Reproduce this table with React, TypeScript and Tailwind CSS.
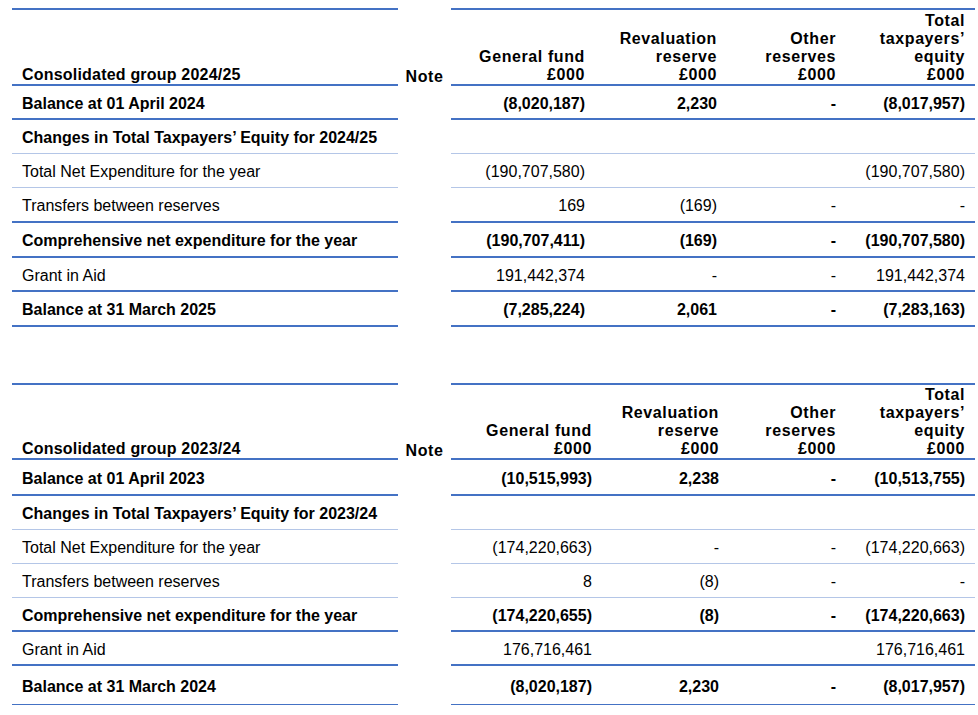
import React from "react";

type Row = {
  label: string;
  values: string[];
  bold?: boolean;
  line: "thick" | "light" | "thin";
  h: string;
};

type TableProps = {
  title: string;
  cols: string[];
  headerH: string;
  rows: Row[];
};

const lineClass = {
  thick: "border-b-2 border-[#4472C4]",
  light: "border-b border-[#B4C6E7]",
  thin: "border-b border-[#4472C4]",
};

const headers = [
  ["General fund", "£000"],
  ["Revaluation", "reserve", "£000"],
  ["Other", "reserves", "£000"],
  ["Total", "taxpayers’", "equity", "£000"],
];

function EquityTable({ title, cols, headerH, rows }: TableProps) {
  return (
    <div className="flex flex-col">
      {/* header */}
      <div className={`flex ${headerH}`}>
        <div className="w-[386px] border-y-2 border-[#4472C4] flex items-end pl-[10px] font-bold leading-[18px] tracking-[0.2px]">
          {title}
        </div>
        <div className="w-[53px] flex items-end justify-center font-bold leading-[18px] tracking-[0.6px]">
          Note
        </div>
        <div className="w-[524px] border-y-2 border-[#4472C4] flex">
          {headers.map((lines, i) => (
            <div
              key={i}
              className={`${cols[i]} flex flex-col justify-end items-end pr-[10px] font-bold leading-[18px] tracking-[0.6px] text-right`}
            >
              {lines.map((l) => (
                <span key={l}>{l}</span>
              ))}
            </div>
          ))}
        </div>
      </div>

      {rows.map((r) => (
        <div key={r.label} className={`flex ${r.h} ${r.bold ? "font-bold" : ""}`}>
          <div className={`w-[386px] ${lineClass[r.line]} flex items-center pl-[10px] pt-[3px]`}>
            {r.label}
          </div>
          <div className="w-[53px]" />
          <div className={`w-[524px] ${lineClass[r.line]} flex`}>
            {r.values.map((v, i) => (
              <div key={i} className={`${cols[i]} flex items-center justify-end pr-[10px] pt-[3px]`}>
                {v}
              </div>
            ))}
          </div>
        </div>
      ))}
    </div>
  );
}

const rows2425: Row[] = [
  { label: "Balance at 01 April 2024", values: ["(8,020,187)", "2,230", "-", "(8,017,957)"], bold: true, line: "thick", h: "h-[34px]" },
  { label: "Changes in Total Taxpayers’ Equity for 2024/25", values: ["", "", "", ""], bold: true, line: "light", h: "h-[34px]" },
  { label: "Total Net Expenditure for the year", values: ["(190,707,580)", "", "", "(190,707,580)"], line: "light", h: "h-[34px]" },
  { label: "Transfers between reserves", values: ["169", "(169)", "-", "-"], line: "thick", h: "h-[35px]" },
  { label: "Comprehensive net expenditure for the year", values: ["(190,707,411)", "(169)", "-", "(190,707,580)"], bold: true, line: "thick", h: "h-[35px]" },
  { label: "Grant in Aid", values: ["191,442,374", "-", "-", "191,442,374"], line: "thick", h: "h-[34px]" },
  { label: "Balance at 31 March 2025", values: ["(7,285,224)", "2,061", "-", "(7,283,163)"], bold: true, line: "thick", h: "h-[35px]" },
];

const rows2324: Row[] = [
  { label: "Balance at 01 April 2023", values: ["(10,515,993)", "2,238", "-", "(10,513,755)"], bold: true, line: "thick", h: "h-[36px]" },
  { label: "Changes in Total Taxpayers’ Equity for 2023/24", values: ["", "", "", ""], bold: true, line: "light", h: "h-[34px]" },
  { label: "Total Net Expenditure for the year", values: ["(174,220,663)", "-", "-", "(174,220,663)"], line: "light", h: "h-[34px]" },
  { label: "Transfers between reserves", values: ["8", "(8)", "-", "-"], line: "light", h: "h-[34px]" },
  { label: "Comprehensive net expenditure for the year", values: ["(174,220,655)", "(8)", "-", "(174,220,663)"], bold: true, line: "thick", h: "h-[34px]" },
  { label: "Grant in Aid", values: ["176,716,461", "", "", "176,716,461"], line: "thick", h: "h-[34px]" },
  { label: "Balance at 31 March 2024", values: ["(8,020,187)", "2,230", "-", "(8,017,957)"], bold: true, line: "thin", h: "h-[39px]" },
];

export default function App() {
  return (
    <div className="w-[978px] h-[715px] bg-white text-black text-[16px] pl-[12px] pt-[8px] font-['Liberation_Sans',Arial,sans-serif] overflow-hidden">
      <EquityTable
        title="Consolidated group 2024/25"
        cols={["w-[144px]", "w-[132px]", "w-[119px]", "w-[129px]"]}
        headerH="h-[78px]"
        rows={rows2425}
      />
      <div className="mt-[56px]">
        <EquityTable
          title="Consolidated group 2023/24"
          cols={["w-[151px]", "w-[127px]", "w-[117px]", "w-[129px]"]}
          headerH="h-[77px]"
          rows={rows2324}
        />
      </div>
    </div>
  );
}
